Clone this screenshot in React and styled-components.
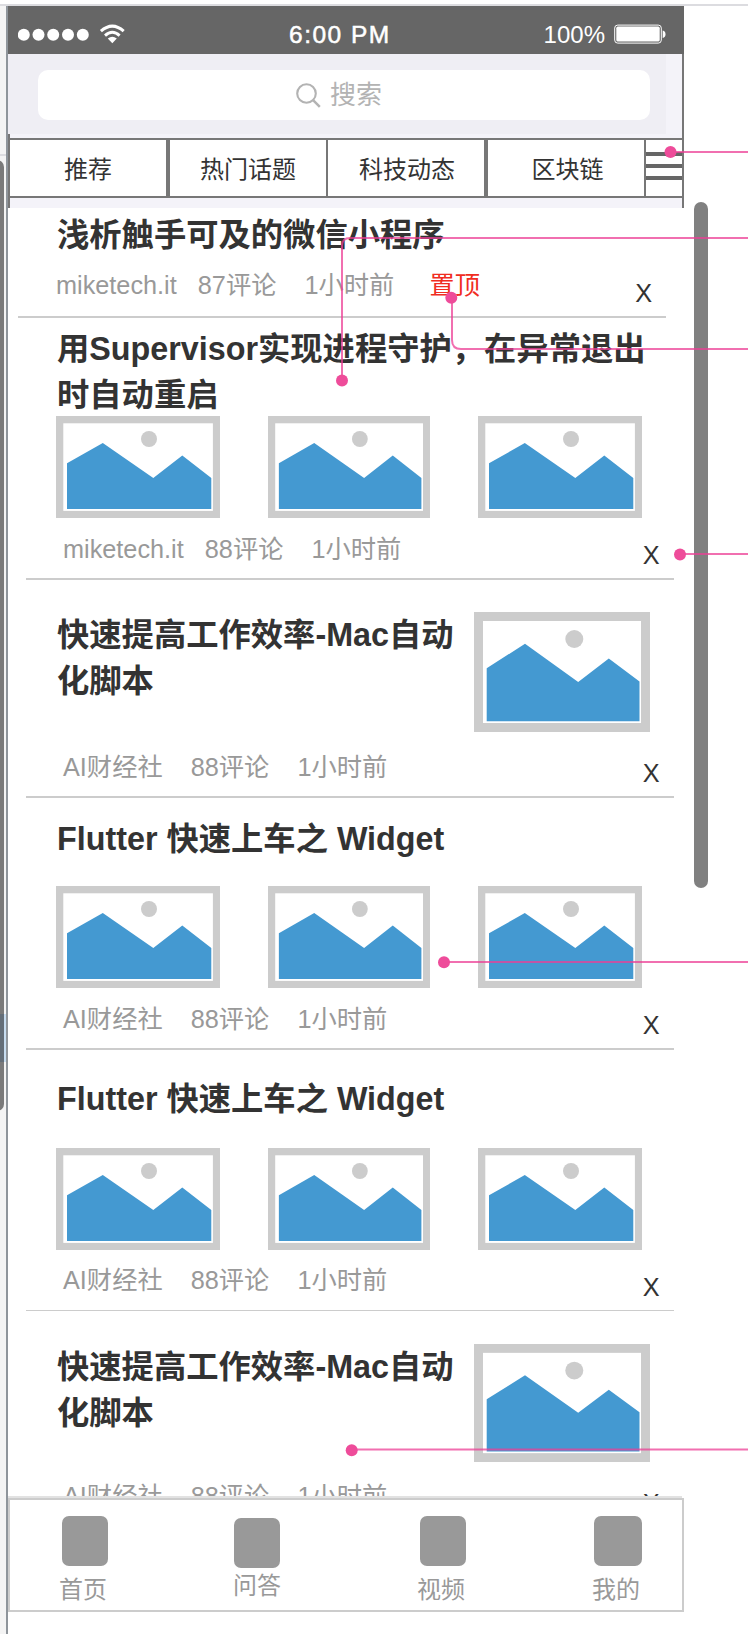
import React from "react";
import styled, { createGlobalStyle } from "styled-components";

const GlobalStyle = createGlobalStyle`
  * { box-sizing: border-box; }
  body {
    margin: 0;
    background: #fff;
    color: #333;
    font-family: "Liberation Sans", "Noto Sans CJK SC", sans-serif;
  }
`;

const Page = styled.div`
  position: relative;
  width: 748px;
  height: 1634px;
  padding-top: 4px;
  overflow: hidden;
`;

const Canvas = styled.div`
  display: flex;
  height: 1630px;
  border-top: 2px solid #dcdce0;
`;

const Sidebar = styled.aside`
  position: relative;
  flex: none;
  display: flex;
  flex-direction: column;
  width: 8px;
  background: #f4f4f4;
  border-right: 2px solid #8f959b;
`;

const SidebarHead = styled.div`
  height: 150px;
  border-bottom: 2px solid #dcdce0;
`;

const SidebarSelection = styled.div`
  height: 48px;
  margin-top: 858px;
  background: #c8ddf0;
`;

const SidebarThumb = styled.div`
  position: absolute;
  left: -10px;
  top: 154px;
  width: 14px;
  height: 951px;
  border-radius: 7px;
  background: rgba(0, 0, 0, 0.5);
`;

const Phone = styled.main`
  flex: none;
  display: flex;
  flex-direction: column;
  width: 676px;
`;

const StatusBar = styled.header`
  display: flex;
  align-items: center;
  height: 48px;
  padding: 7px 18px 0 10px;
  background: #666;
  color: #fff;
  font-size: 24px;
  line-height: 28px;
`;

const Signal = styled.svg`
  display: block;
  width: 110px;
  height: 24px;
`;

const Clock = styled.span`
  margin-left: 161px;
  padding-top: 2px;
  width: 110px;
  font-size: 24.5px;
  letter-spacing: 1.5px;
  white-space: nowrap;
  -webkit-text-stroke: 0.5px #fff;
`;

const Percent = styled.span`
  margin-left: auto;
  padding-top: 2px;
  margin-right: 9px;
`;

const Battery = styled.svg`
  display: block;
  width: 52px;
  height: 20px;
`;

const SearchArea = styled.div`
  height: 80px;
  padding: 16px 16px 14px 30px;
  margin-right: 16px;
  background: #efeef4;
`;

const Header = styled.div`
  border-right: 2px solid #777;
  background: #f4f3f9;
  height: 154px;
`;

const SearchBox = styled.div`
  display: flex;
  align-items: center;
  justify-content: center;
  gap: 9px;
  height: 50px;
  padding-right: 10px;
  border-radius: 10px;
  background: #fff;
  color: #b3b3b3;
  font-size: 26px;
  line-height: 48px;
`;

const TabArea = styled.div`
  height: 74px;
  padding: 4px 0 10px;
  border-left: 2px solid #777;
`;

const Tabs = styled.nav`
  display: flex;
  height: 60px;
  border-top: 2px solid #777;
  border-bottom: 2px solid #777;
  background: #fff;
`;

const Tab = styled.div`
  display: flex;
  align-items: center;
  justify-content: center;
  width: ${(p) => 156 + p.$edge}px;
  padding: 4px 0 0 ${(p) => p.$inset || 0}px;
  border-right: ${(p) => p.$edge}px solid #777;
  font-size: 24px;
  line-height: 36px;
  white-space: nowrap;
`;

const Menu = styled.div`
  flex: 1;
  display: flex;
  flex-direction: column;
  justify-content: flex-start;
  gap: 8.3px;
  padding-top: 12px;
`;

const MenuBar = styled.i`
  height: 3.7px;
  background: #666;
`;

const Feed = styled.section`
  height: 1288px;
  overflow: hidden;
`;

const Article = styled.article`
  display: flex;
  flex-direction: column;
  height: ${(p) => p.$height}px;
  padding-top: ${(p) => p.$top}px;
`;

const Body = styled.div`
  display: flex;
  justify-content: space-between;
  padding: 0 34px 0 49px;
`;

const Title = styled.h2`
  margin: 0;
  font-size: 32.3px;
  font-weight: 700;
  line-height: 46px;
  white-space: pre;
`;

const Gallery = styled.div`
  display: flex;
  justify-content: space-between;
  margin-top: ${(p) => p.$gap}px;
  padding: 0 42px 0 48px;
`;

const Picture = styled.svg`
  display: block;
  flex: none;
`;

const Footer = styled.footer`
  display: flex;
  justify-content: space-between;
  align-items: flex-start;
  margin-top: auto;
  height: ${(p) => p.$height}px;
  padding-left: ${(p) => (p.$pinned ? 48 : 55)}px;
  padding-right: ${(p) => (p.$pinned ? 32 : 24.5)}px;
  font-size: 25.27px;
  line-height: 36px;
  white-space: pre;
  color: #999;
`;

const Pinned = styled.span`
  color: #f02d1f;
`;

const Close = styled.span`
  margin-top: ${(p) => p.$drop}px;
  color: #333;
`;

const Divider = styled.hr`
  flex: none;
  width: 648px;
  height: ${(p) => p.$thick || 2}px;
  margin: 0 0 0 ${(p) => (p.$pinned ? 10 : 18)}px;
  border: 0;
  background: #ccc;
`;

const FeedEdge = styled.div`
  height: 2px;
  margin-right: 2px;
  background: #e2e2e2;
`;

const BottomNav = styled.nav`
  display: flex;
  height: 114px;
  border: 2px solid #ccc;
  background: #fff;
`;

const NavItem = styled.div`
  display: flex;
  flex-direction: column;
  align-items: flex-start;
  margin-left: ${(p) => p.$before}px;
  padding-top: ${(p) => p.$top}px;
  width: 50px;
  color: #999;
  font-size: 24px;
  line-height: 34px;
`;

const NavIcon = styled.i`
  width: ${(p) => p.$width}px;
  height: 50px;
  margin-left: ${(p) => p.$shift}px;
  margin-bottom: ${(p) => p.$gap}px;
  border-radius: 7px;
  background: #999;
`;

const ScrollThumb = styled.div`
  width: 14px;
  height: 686px;
  margin: 196px 0 0 10px;
  border-radius: 7px;
  background: #808080;
`;

const Callouts = styled.svg`
  position: absolute;
  inset: 0;
  pointer-events: none;
`;

function SmallPicture({ width = 164 }) {
  return (
    <Picture width={width} height="102" viewBox="0 0 164 102" preserveAspectRatio="none">
      <rect width="164" height="102" fill="#ccc" />
      <rect x="7.3" y="7.3" width="149.6" height="87.6" fill="#fff" />
      <circle cx="93" cy="23" r="8" fill="#ccc" />
      <path d="M11 47.3L46.8 27L97.3 62L126.3 39.5L155.3 62V93H11Z" fill="#4499d1" />
    </Picture>
  );
}

function LargePicture({ height = 120 }) {
  return (
    <Picture width="176" height={height} viewBox="0 0 176 120" preserveAspectRatio="none">
      <rect width="176" height="120" fill="#ccc" />
      <rect x="9" y="9" width="158" height="102" fill="#fff" />
      <circle cx="100.3" cy="27" r="9" fill="#ccc" />
      <path d="M12.7 56.2L51 31.8L104.2 70L134.8 46.6L165.5 69.5V109.2H12.7Z" fill="#4499d1" />
    </Picture>
  );
}

function Meta({ text, pinned, height, thick, drop = 6 }) {
  return (
    <>
      <Footer $height={height} $pinned={pinned}>
        <span>
          {text}
          {pinned && <Pinned>{"     置顶"}</Pinned>}
        </span>
        <Close $drop={drop}>X</Close>
      </Footer>
      <Divider $pinned={pinned} $thick={thick} />
    </>
  );
}

function Pictures({ gap }) {
  return (
    <Gallery $gap={gap}>
      <SmallPicture />
      <SmallPicture width={162} />
      <SmallPicture />
    </Gallery>
  );
}

const AI_META = "AI财经社    88评论    1小时前";

export default function App() {
  return (
    <>
      <GlobalStyle />
      <Page>
        <Canvas>
          <Sidebar>
            <SidebarHead />
            <SidebarSelection />
            <SidebarThumb />
          </Sidebar>
          <Phone>
            <StatusBar>
              <Signal viewBox="0 0 110 24" fill="#fff">
                {[5.8, 20.5, 35.2, 50, 64.8].map((x) => (
                  <circle key={x} cx={x} cy="12.8" r="6" />
                ))}
                <path d="M82.9 9.2Q94.3 -1 105.7 9.2" fill="none" stroke="#fff" strokeWidth="3" />
                <path d="M87 13.6Q94.3 7 101.6 13.6" fill="none" stroke="#fff" strokeWidth="2.9" />
                <path d="M89.8 16.6Q94.3 13 98.8 16.6L94.3 21.2Z" />
              </Signal>
              <Clock>6:00 PM</Clock>
              <Percent>100%</Percent>
              <Battery viewBox="0 0 52 20">
                <rect x="0.7" y="1.1" width="46.6" height="18" rx="3" fill="none" stroke="#fff" strokeWidth="1" />
                <rect x="2.3" y="2.6" width="43.4" height="15" rx="1.6" fill="#fff" />
                <path d="M48.7 6.5Q51.5 7 51.5 10.2Q51.5 13.4 48.7 14Z" fill="#fff" />
              </Battery>
            </StatusBar>
            <Header>
              <SearchArea>
                <SearchBox>
                  <svg width="25" height="25" viewBox="0 0 25 25" fill="none" stroke="#b3b3b3" strokeWidth="2.1">
                    <circle cx="10.5" cy="10.5" r="9.3" />
                    <path d="M16.8 16.8L23.8 23.8" strokeWidth="2.5" />
                  </svg>
                  <span>搜索</span>
                </SearchBox>
              </SearchArea>
              <TabArea>
                <Tabs>
                  <Tab $edge={4}>推荐</Tab>
                  <Tab $edge={2}>热门话题</Tab>
                  <Tab $edge={4} $inset={2}>科技动态</Tab>
                  <Tab $edge={2} $inset={3}>区块链</Tab>
                  <Menu>
                    <MenuBar />
                    <MenuBar />
                    <MenuBar />
                  </Menu>
                </Tabs>
              </TabArea>
            </Header>
            <Feed>
              <Article $height={110} $top={4}>
                <Body>
                  <Title>浅析触手可及的微信小程序</Title>
                </Body>
                <Meta pinned height={49} drop={8} text="miketech.it   87评论    1小时前" />
              </Article>
              <Article $height={262} $top={8}>
                <Body>
                  <Title>{"用Supervisor实现进程守护，在异常退出\n时自动重启"}</Title>
                </Body>
                <Pictures gap={-2} />
                <Meta height={47} text="miketech.it   88评论    1小时前" />
              </Article>
              <Article $height={218} $top={32}>
                <Body>
                  <Title>{"快速提高工作效率-Mac自动\n化脚本"}</Title>
                  <LargePicture />
                </Body>
                <Meta height={47} text={AI_META} />
              </Article>
              <Article $height={252} $top={18}>
                <Body>
                  <Title>Flutter 快速上车之 Widget</Title>
                </Body>
                <Pictures gap={24} />
                <Meta height={47} text={AI_META} />
              </Article>
              <Article $height={261} $top={26}>
                <Body>
                  <Title>Flutter 快速上车之 Widget</Title>
                </Body>
                <Pictures gap={26} />
                <Meta height={48} drop={7} thick={1} text={AI_META} />
              </Article>
              <Article $height={218} $top={33}>
                <Body>
                  <Title>{"快速提高工作效率-Mac自动\n化脚本"}</Title>
                  <LargePicture height={118} />
                </Body>
                <Meta height={49} drop={7} text={AI_META} />
              </Article>
            </Feed>
            <FeedEdge />
            <BottomNav>
              <NavItem $before={49} $top={16}>
                <NavIcon $width={46} $shift={3} $gap={7} />
                首页
              </NavItem>
              <NavItem $before={124} $top={18}>
                <NavIcon $width={46} $shift={1} $gap={1} />
                问答
              </NavItem>
              <NavItem $before={134} $top={16}>
                <NavIcon $width={46} $shift={3} $gap={7} />
                视频
              </NavItem>
              <NavItem $before={125} $top={16}>
                <NavIcon $width={48} $shift={2} $gap={7} />
                我的
              </NavItem>
            </BottomNav>
          </Phone>
          <ScrollThumb />
        </Canvas>
        <Callouts width="748" height="1634" viewBox="0 0 748 1634">
          <g fill="none" stroke="#ec3f96" strokeOpacity="0.75" strokeWidth="2">
            <path d="M670 152H748" />
            <path d="M748 238H350Q342 238 342 246V380" />
            <path d="M452 298V340Q452 349 461 349H748" />
            <path d="M680 554H748" />
            <path d="M444 962H748" />
            <path d="M352 1449.5H748" />
          </g>
          <g fill="#ee4c9a">
            <circle cx="670.5" cy="152" r="6" />
            <circle cx="342" cy="380.5" r="6" />
            <circle cx="451.3" cy="297.8" r="6" />
            <circle cx="680" cy="554.5" r="6" />
            <circle cx="444" cy="962.3" r="6" />
            <circle cx="351.7" cy="1450.3" r="6" />
          </g>
        </Callouts>
      </Page>
    </>
  );
}
